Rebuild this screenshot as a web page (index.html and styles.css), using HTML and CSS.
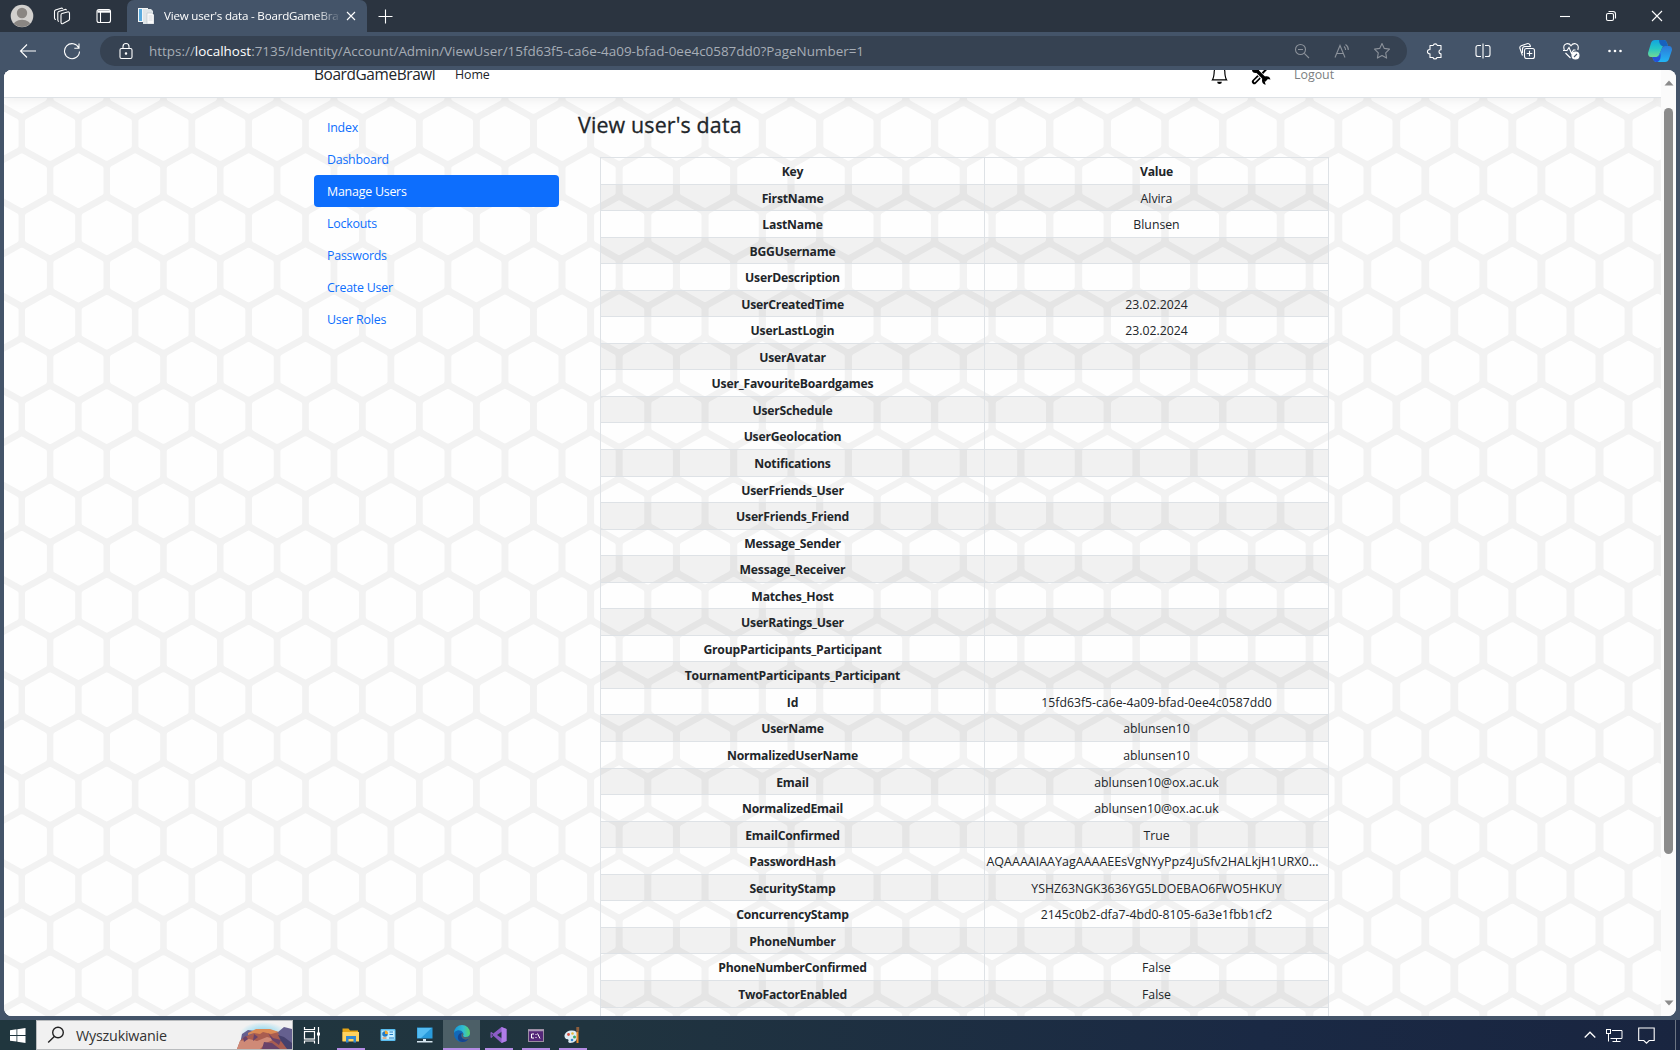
FILE: index.html
```html
<!DOCTYPE html>
<html lang="pl">
<head>
<meta charset="utf-8">
<title>View user's data - BoardGameBrawl</title>
<link rel="stylesheet" href="styles.css">
</head>
<body>
<header class="titlebar">
  <div class="slot avatar"><svg width="24" height="24" viewBox="0 0 24 24"><defs><clipPath id="av"><circle cx="12" cy="12" r="11"/></clipPath></defs><circle cx="12" cy="12" r="11.3" fill="#d2d0ce"/><g clip-path="url(#av)" fill="#8a8683"><circle cx="12" cy="9" r="5.2"/><path d="M2.500 24c0-5 4-8.300 9.500-8.300s9.500 3.300 9.500 8.300z"/></g></svg></div>
  <div class="slot spaces"><svg class="line" width="18" height="18" viewBox="0 0 18 18"><path d="M9 6.500l5.500-1.500q2-.5 2 1.500v5.500q0 1-1 1.500L10 16.500q-2 .7-2-1.300V8q0-1.200 1-1.500z"/><path d="M6 14.500q-1.200-.3-1.200-1.500V6q0-1.200 1-1.500L12 2.500q1-.3 1.500.7M3 12.500q-1.500 0-1.500-1.500V4.500q0-1 1-1.500L8 1.200q1.200-.3 1.800.6"/></svg></div>
  <div class="slot vertical"><svg class="line" width="16" height="16" viewBox="0 0 16 16"><rect x="1" y="1.500" width="13.500" height="13" rx="2"/><path d="M1.500 3.500H14" stroke-width="2.400"/><path d="M4.500 4v10"/></svg></div>
  <div class="tab">
    <svg width="16" height="16" viewBox="0 0 16 16"><rect x="0" y="0" width="10" height="14" fill="#f4f6f7"/><rect x="1" y="1" width="3" height="12" fill="#58a9dc"/><path d="M5 1h8l2 2v13H5z" fill="#dfe5e8"/><path d="M9 5h5l2 2v9H9z" fill="#fafafa" stroke="#b9c3c9" stroke-width=".6"/><path d="M10.500 8h4M10.500 10h4M10.500 12h4" stroke="#c8cfd4" stroke-width=".7"/></svg>
    <span class="tab-title">View user's data - BoardGameBrawl</span>
    <svg class="line" width="10" height="10" viewBox="0 0 10 10"><path d="M1 1l8 8M9 1L1 9"/></svg>
  </div>
  <div class="slot plus"><svg class="line" width="15" height="15" viewBox="0 0 15 15"><path d="M7.500 .5v14M.5 7.500h14"/></svg></div>
  <div class="window-controls">
    <svg class="line" width="12" height="12" viewBox="0 0 12 12"><path d="M1 6.500h10"/></svg>
    <svg class="line" width="12" height="12" viewBox="0 0 12 12"><rect x="1.500" y="3.500" width="7" height="7" rx="1.500"/><path d="M3.500 1.500H8q2.500 0 2.500 2.500v4.500"/></svg>
    <svg class="line" width="12" height="12" viewBox="0 0 12 12"><path d="M1 1l10 10M11 1L1 11"/></svg>
  </div>
</header>

<div class="toolbar">
  <div class="slot"><svg class="line" width="18" height="16" viewBox="0 0 18 16"><path d="M17 8H1.500M8 1.500L1.500 8 8 14.500"/></svg></div>
  <div class="slot reload"><svg class="line" width="18" height="18" viewBox="0 0 18 18"><path d="M15.800 6A7.500 7.500 0 1 0 16.500 9.500M16 1.500V6.200h-4.700"/></svg></div>
  <div class="address">
    <svg class="line" width="20" height="20" viewBox="0 0 20 20"><rect x="4" y="7.500" width="12" height="10" rx="1.500"/><path d="M7 7.500V5.500a3 3 0 0 1 6 0v2"/><circle cx="10" cy="12.500" r=".7" fill="#fff"/></svg>
    <span class="url">https://<b>localhost</b>:7135/Identity/Account/Admin/ViewUser/15fd63f5-ca6e-4a09-bfad-0ee4c0587dd0?PageNumber=1</span>
    <div class="slot dim"><svg class="line" width="16" height="16" viewBox="0 0 16 16"><circle cx="6.500" cy="6.500" r="5"/><path d="M10.300 10.300L15 15M4 6.500h5"/></svg></div>
    <div class="slot dim"><svg class="line" width="18" height="18" viewBox="0 0 18 18"><path d="M2 15.500L7 3.500l5 12M3.800 11.500h6.400M11 4.500q1.600 1.300 1.600 3.500M12.500 2.500q3 2 2.800 5.500"/></svg></div>
    <div class="slot dim"><svg class="line" width="18" height="18" viewBox="0 0 18 18"><path d="M9 1.500l2.300 4.900 5.200.7-3.800 3.700.9 5.300L9 13.500l-4.600 2.600.9-5.300L1.500 7.100l5.200-.7z" stroke-linejoin="round"/></svg></div>
  </div>
  <div class="slot ext"><svg class="line" width="18" height="18" viewBox="0 0 18 18"><path d="M4 3.500h3.200a2.100 2.100 0 0 1 4.100 0H15v4.200a2 2 0 0 0 0 4v3.800h-4a2.100 2.100 0 0 1-4 0H4v-3.800a2.100 2.100 0 1 1 0-4.100z" stroke-linejoin="round"/></svg></div>
  <div class="divider"></div>
  <div class="slot"><svg class="line" width="18" height="18" viewBox="0 0 18 18"><path d="M7 3.500H4q-2 0-2 2v7q0 2 2 2h3M11 3.500h3q2 0 2 2v7q0 2-2 2h-3M9 1.500v15"/></svg></div>
  <div class="slot coll"><svg class="line" width="18" height="18" viewBox="0 0 18 18"><rect x="6.500" y="6.500" width="10" height="10" rx="2"/><path d="M11.500 8.700v5.600M8.700 11.500h5.600M4.500 13.500L2 6.500q-.7-2 1.200-2.800L9 1.700q2-.6 3 1.300l.5 1.500M4.500 11V7q0-2.500 2.500-2.500h6"/></svg></div>
  <div class="slot"><svg class="line" width="18" height="18" viewBox="0 0 18 18"><path d="M2.300 8Q.5 3 4.500 1.700 7.500 1.200 9 3.700q1.700-2.500 4.500-2Q17.500 3 15.800 8M3.500 11l5 5M1 8.500h4l2-3 2.500 6 2-3.500h2"/><circle cx="13.500" cy="13.500" r="3.500" fill="#fff"/><path d="M12 15l3-3" stroke="#45556a"/></svg></div>
  <div class="slot dots"><svg width="16" height="4" viewBox="0 0 16 4"><g fill="#fff"><circle cx="2.500" cy="2" r="1.300"/><circle cx="8" cy="2" r="1.300"/><circle cx="13.500" cy="2" r="1.300"/></g></svg></div>
  <div class="slot copilot"><svg width="26" height="24" viewBox="0 0 26 24"><defs><linearGradient id="c1" x1="0" y1="0" x2="0" y2="1"><stop offset="0" stop-color="#12a5df"/><stop offset=".5" stop-color="#25c6c5"/><stop offset="1" stop-color="#72d994"/></linearGradient><linearGradient id="c2" x1="0" y1="0" x2="0" y2="1"><stop offset="0" stop-color="#2d78d8"/><stop offset="1" stop-color="#22b6f4"/></linearGradient></defs><path d="M8 1h9q2 0 3 3l1 3h-5L12 16q-1 2.500-3 2H4q-3 0-3-4L4 4q1-3 4-3z" fill="url(#c1)"/><path d="M12 1h5q2 0 3 3l1 3h-6q-3-2-3-6z" fill="#1762be"/><path d="M18 7h4q3 0 3 4l-3 9q-1 3-4 3H9q-2 0-3-3l-.5-2H9q2 0 3-2l3-7q.8-2 3-2z" fill="url(#c2)"/><path d="M5.500 18H10q2-.3 2.500-2l1-2q1 7-3 9H9q-2 0-3-3z" fill="#2450d9"/></svg></div>
</div>

<div class="frame">
  <div class="page">
    <svg class="honeycomb" id="honeycomb" width="1657" height="946"></svg>
    <nav class="site-nav">
      <span class="brand">BoardGameBrawl</span>
      <span class="home">Home</span>
      <svg class="bell" width="19" height="19" viewBox="0 0 16 16"><path d="M8 16a2 2 0 0 0 2-2H6a2 2 0 0 0 2 2M8 1.918l-.797.161A4 4 0 0 0 4 6c0 .628-.134 2.197-.459 3.742-.16.767-.376 1.566-.663 2.258h10.244c-.287-.692-.502-1.490-.663-2.258C12.134 8.197 12 6.628 12 6a4 4 0 0 0-3.203-3.920zM14.220 12c.223.447.481.801.78 1H1c.299-.199.557-.553.780-1C2.680 10.200 3 6.880 3 6c0-2.420 1.720-4.440 4.005-4.901a1 1 0 1 1 1.990 0A5 5 0 0 1 13 6c0 .880.320 4.200 1.220 6"/></svg>
      <svg class="tools" width="20" height="20" viewBox="0 0 20 20"><path d="M15.500 4L4 16" stroke="#000" stroke-width="2"/><path d="M8.200 11.800L3.300 16.700" stroke="#000" stroke-width="4.800" stroke-linecap="round"/><path d="M7.800 12.200L3.600 16.400" stroke="#fff" stroke-width="1.500" stroke-linecap="round"/><path d="M3 3l11 11.500" stroke="#fff" stroke-width="5"/><path d="M3 3l12.500 12.500" stroke="#000" stroke-width="3.400"/><path d="M19.500 14.500a4.300 4.300 0 1 0-4.800 5.200l-1-3.200 2.600-2.500z"/><circle cx="4.500" cy="4.500" r="3.500"/></svg>
      <span class="logout">Logout</span>
    </nav>
    <main class="content">
      <ul class="menu">
        <li>Index</li><li>Dashboard</li><li class="active">Manage Users</li><li>Lockouts</li><li>Passwords</li><li>Create User</li><li>User Roles</li>
      </ul>
      <section class="details">
        <h3>View user's data</h3>
        <table>
          <tbody>
          <tr class="head"><th>Key</th><th>Value</th></tr>
          <tr><th>FirstName</th><td>Alvira</td></tr>
          <tr><th>LastName</th><td>Blunsen</td></tr>
          <tr><th>BGGUsername</th><td></td></tr>
          <tr><th>UserDescription</th><td></td></tr>
          <tr><th>UserCreatedTime</th><td>23.02.2024</td></tr>
          <tr><th>UserLastLogin</th><td>23.02.2024</td></tr>
          <tr><th>UserAvatar</th><td></td></tr>
          <tr><th>User_FavouriteBoardgames</th><td></td></tr>
          <tr><th>UserSchedule</th><td></td></tr>
          <tr><th>UserGeolocation</th><td></td></tr>
          <tr><th>Notifications</th><td></td></tr>
          <tr><th>UserFriends_User</th><td></td></tr>
          <tr><th>UserFriends_Friend</th><td></td></tr>
          <tr><th>Message_Sender</th><td></td></tr>
          <tr><th>Message_Receiver</th><td></td></tr>
          <tr><th>Matches_Host</th><td></td></tr>
          <tr><th>UserRatings_User</th><td></td></tr>
          <tr><th>GroupParticipants_Participant</th><td></td></tr>
          <tr><th>TournamentParticipants_Participant</th><td></td></tr>
          <tr><th>Id</th><td>15fd63f5-ca6e-4a09-bfad-0ee4c0587dd0</td></tr>
          <tr><th>UserName</th><td>ablunsen10</td></tr>
          <tr><th>NormalizedUserName</th><td>ablunsen10</td></tr>
          <tr><th>Email</th><td>ablunsen10@ox.ac.uk</td></tr>
          <tr><th>NormalizedEmail</th><td>ablunsen10@ox.ac.uk</td></tr>
          <tr><th>EmailConfirmed</th><td>True</td></tr>
          <tr><th>PasswordHash</th><td class="hash">AQAAAAIAAYagAAAAEEsVgNYyPpz4JuSfv2HALkjH1URX0...</td></tr>
          <tr><th>SecurityStamp</th><td>YSHZ63NGK3636YG5LDOEBAO6FWO5HKUY</td></tr>
          <tr><th>ConcurrencyStamp</th><td>2145c0b2-dfa7-4bd0-8105-6a3e1fbb1cf2</td></tr>
          <tr><th>PhoneNumber</th><td></td></tr>
          <tr><th>PhoneNumberConfirmed</th><td>False</td></tr>
          <tr><th>TwoFactorEnabled</th><td>False</td></tr>
          <tr><th></th><td></td></tr>
          </tbody>
        </table>
      </section>
    </main>
  </div>
  <div class="scrollbar">
    <svg width="10" height="6" viewBox="0 0 10 6"><path d="M5 .5L9.500 5.500H.5z" fill="#8b8b8b"/></svg>
    <div class="thumb"></div>
    <svg width="10" height="6" viewBox="0 0 10 6"><path d="M5 5.500L9.500 .5H.5z" fill="#8b8b8b"/></svg>
  </div>
</div>

<footer class="taskbar">
  <div class="start"><svg width="17" height="17" viewBox="0 0 17 17"><path d="M1 3.200l6.500-.9V8H1zM8.300 2.200L16.500 1v7H8.300zM1 8.900h6.500v5.700L1 13.700zM8.300 8.900h8.200V16l-8.200-1.200z" fill="#fff"/></svg></div>
  <div class="search">
    <svg width="18" height="18" viewBox="0 0 18 18" fill="none" stroke="#222" stroke-width="1.400"><circle cx="11" cy="6.500" r="5.300"/><path d="M7.300 10.500L1.200 16.500"/></svg>
    <span>Wyszukiwanie</span>
    <svg class="canyon" width="58" height="28" viewBox="0 0 58 28"><defs><radialGradient id="sky"><stop offset="0" stop-color="#73d3f3"/><stop offset="1" stop-color="#f1f1f1"/></radialGradient></defs><ellipse cx="29" cy="12" rx="23" ry="11" fill="url(#sky)"/><path d="M8 13l6-4 7 1 9-2 14 3 6-5 8 2v20H5z" fill="#65608f"/><path d="M3 28l3-8 4-4 8-3 6-5h10l10 4 4 6 6 4 4 6z" fill="#a95d50"/><path d="M14 12l8-4h14l9 3-8 2-8-2-3 2-6-1-6 2z" fill="#dc8a55"/><path d="M6 20l9-2 8 2 10-4 8 2-9 4-6 6H3z" fill="#cf8a77"/><path d="M20 13l4 3-5 4zM34 12l5 5 8 2-2 5-7-5zM30 21l8 1 8 6H28zM9 17l3-2 2 3-4 3z" fill="#69436a"/><path d="M44 14l6 2 8 6v6h-5l-6-8z" fill="#45416d"/></svg>
  </div>
  <div class="app view"><svg width="18" height="17" viewBox="0 0 18 17" fill="none" stroke="#fff" stroke-width="1.200"><path d="M1.500 0v2.500h10V0M1.500 16.500V14h10v2.500"/><rect x="1.500" y="4.500" width="10" height="7.500"/><path d="M15.500 0v17"/><path d="M14 5.500h3v3h-3z" fill="#fff" stroke="none"/></svg></div>
  <div class="app running"><svg width="17" height="16" viewBox="0 0 17 16"><path d="M.5 1.500h6l1.500 2H16V14H.5z" fill="#e6a515"/><path d="M.5 5H17v9.500H.5z" fill="#ffd35f"/><path d="M4 9h10v6.500h-2.500V12h-5v3.500H4z" fill="#3489d0"/></svg></div>
  <div class="app"><svg width="16" height="14" viewBox="0 0 16 14"><rect x=".5" y="1" width="15" height="12" rx="1" fill="#59bdf0"/><rect x="1.500" y="2.500" width="13" height="9" fill="#c8efff"/><circle cx="5" cy="6" r="2.800" fill="#237cc4"/><path d="M5 6V2.500A3 3 0 0 1 8 6z" fill="#f3a72c"/><path d="M9.500 4H13M9.500 6.500H13M9 10h5" stroke="#237cc4"/><path d="M2.500 10h4" stroke="#e47528"/></svg></div>
  <div class="app"><svg width="17" height="16" viewBox="0 0 17 16"><path d="M1 .5h15.500v11H1z" fill="#299bdc"/><path d="M1.500 1h14L5 11H1.500z" fill="#54bcf2"/><path d="M7 12h3v2H7zM1 14h15.500v1.500H1z" fill="#d5e5ef"/></svg></div>
  <div class="app current"><svg width="18" height="18" viewBox="0 0 18 18"><defs><linearGradient id="e1"><stop offset="0" stop-color="#1595d8"/><stop offset=".6" stop-color="#32bed0"/><stop offset="1" stop-color="#59d764"/></linearGradient></defs><circle cx="9" cy="9" r="8" fill="#1269b9"/><path d="M1 8A8 8 0 0 1 17 8q0 4-4.500 4-3 0-2.500-1.500 1-1 0-3Q8.500 5 5 5.300 2 6 1 8z" fill="url(#e1)"/><path d="M9 8q-2 2 0 5 2.500 2.500 6.500.8-2.500 3.500-6.500 3.200-5-1-4-6 1-3 4-3z" fill="#17458e"/><path d="M9.300 8q1.700.5.900 2-.7 1.800 2.300 2.200 2.400.2 4-1.200l-.8 2.500Q12 15.500 9.500 13 7.500 10.500 9.300 8z" fill="#52636b"/></svg></div>
  <div class="app running vs"><svg width="17" height="16" viewBox="0 0 17 16"><path d="M11.500 0L16.500 2v12l-5 2-8.200-7.200L1.500 11 .5 10.500v-5l1-.5 1.800 1.500zM12 4.500L7 8l5 3.500zM1.800 6.500v3L3 8z" fill="#8c5cc8" fill-rule="evenodd"/><path d="M11.500 0L16.500 2v12l-5 2z" fill="#b07ce8"/></svg></div>
  <div class="app running"><svg width="16" height="13" viewBox="0 0 16 13"><rect x=".5" y=".5" width="15" height="12" fill="#542779" stroke="#9a8da1"/><path d="M0 1.500h16" stroke="#aa98b7" stroke-width="1.500"/><path d="M6 5H3.500v4H6M8 5v1M8 8v1M9.500 4.500L12 9.500" stroke="#fff" fill="none"/></svg></div>
  <div class="app running"><svg width="17" height="17" viewBox="0 0 17 17"><path d="M7 3.500q7-.5 6.500 5.500-.5 7-7.500 7-2.500-.3-1.500-2.500Q5 12 2 12-.5 10 1 7q2-3.300 6-3.500z" fill="#ddecf4"/><circle cx="4.500" cy="7.500" r="1.400" fill="#d84f40"/><circle cx="8.500" cy="6.500" r="1.300" fill="#e9b83e"/><circle cx="10.500" cy="10" r="1.500" fill="#39a56b"/><circle cx="8" cy="13" r="1.300" fill="#3485ce"/><path d="M13.500 4.500V16" stroke="#e78a2c" stroke-width="2"/><path d="M12.300 0h2.900v4l-1.400 1-1.500-1z" fill="#8e5e3c"/></svg></div>
  <div class="tray">
    <svg width="12" height="8" viewBox="0 0 12 8" fill="none" stroke="#fff" stroke-width="1.300"><path d="M.7 6.500L6 1.200l5.300 5.300"/></svg>
    <svg width="17" height="15" viewBox="0 0 17 15" fill="none" stroke="#fff"><path d="M6 2.500h10v8H4.500M10.500 10.500v3M6.500 13.500h8M2.500 6v7.500"/><rect x=".5" y="1.500" width="4" height="4"/></svg>
    <svg width="17" height="17" viewBox="0 0 17 17" fill="none" stroke="#fff" stroke-width="1.100"><path d="M.7 1h15.500v12.500h-5l-2.700 2.700-2.700-2.700H.7z"/></svg>
    <div class="desktop-peek"></div>
  </div>
</footer>
<script src="honeycomb.js"></script>
</body>
</html>
```

FILE: styles.css
```css
* { box-sizing: border-box; }
body {
  margin: 0;
  width: 1680px;
  height: 1050px;
  overflow: hidden;
  display: flex;
  flex-direction: column;
  background: #445469;
  font-family: "Open Sans", "Noto Sans", sans-serif;
  color: #212529;
}
svg { display: block; flex: none; }
.line { fill: none; stroke: #fff; stroke-width: 1.1; }
.slot { width: 40px; display: flex; align-items: center; justify-content: center; flex: none; }

/* Window title bar */
.titlebar { height: 32px; flex: none; display: flex; background: #2b3440; }
.avatar { margin-left: 2px; }
.vertical { margin-left: 2px; }
.tab {
  width: 240px;
  margin-left: 3px;
  padding: 0 11px;
  display: flex;
  align-items: center;
  background: #445469;
  border-radius: 7px 7px 0 0;
}
.tab-title {
  width: 176px;
  margin: 0 7px 0 10px;
  padding-bottom: 1px;
  overflow: hidden;
  white-space: nowrap;
  color: #fff;
  font-size: 11.6px;
  letter-spacing: -0.2px;
  -webkit-mask-image: linear-gradient(90deg, #000 152px, transparent 178px);
  mask-image: linear-gradient(90deg, #000 152px, transparent 178px);
}
.plus { width: 36px; }
.window-controls { margin-left: auto; width: 138px; display: flex; align-items: center; justify-content: space-around; }

/* Address bar */
.toolbar { height: 38px; flex: none; display: flex; align-items: center; padding-left: 8px; }
.reload { margin: 0 8px 0 4px; }
.address {
  width: 1307px;
  flex: none;
  height: 30px;
  padding: 0 5px 0 16px;
  display: flex;
  align-items: center;
  background: #364252;
  border-radius: 15px;
}
.url { flex: 1; margin-left: 13px; color: #a6adb6; font-size: 13.45px; white-space: nowrap; }
.url b { font-weight: 400; color: #fff; }
.dim .line { stroke: #8b919a; }
.ext { margin-left: 8px; }
.divider { width: 1px; height: 16px; margin: 0 4px; background: #6c7a8a; }
.coll, .dots { margin: 0 4px; }
.copilot { width: 42px; }

/* Browser viewport */
.frame {
  height: 946px;
  flex: none;
  margin: 0 4px 4px;
  display: flex;
  overflow: hidden;
  background: #fff;
  border-radius: 8px;
}
.page { position: relative; width: 1657px; overflow: hidden; }
.honeycomb { position: absolute; left: 0; top: 0; }
.scrollbar { width: 15px; padding: 10px 0; display: flex; flex-direction: column; align-items: center; background: #fbfbfb; }
.thumb { width: 9px; height: 746px; margin: 22px 0 auto; background: #8b8b8b; border-radius: 5px; }

.site-nav {
  position: relative;
  height: 49px;
  margin-top: -21px;
  padding-left: 310px;
  display: flex;
  align-items: center;
  background: #fff;
  border-bottom: 1px solid #dee2e6;
  box-shadow: 0 3px 10px rgba(0, 0, 0, .06);
}
.brand { width: 141px; font-size: 15.4px; letter-spacing: -0.38px; padding-top: 2px; }
.home { width: 755px; font-size: 12.4px; padding-top: 2px; letter-spacing: -.1px; }
.tools { margin: 0 23px 0 22px; }
.bell, .tools { margin-top: 3px; }
.logout { font-size: 12.4px; color: #7c7f82; padding-top: 2px; }

.content { position: relative; display: flex; padding: 13px 0 0 310px; }
.menu { width: 245px; margin: 0; padding: 0; list-style: none; font-size: 12.4px; letter-spacing: -0.22px; color: #0d6efd; }
.menu li { height: 32px; padding: 1px 13px 0; line-height: 32px; }
.menu .active { background: #0d6efd; color: #fff; border-radius: 4px; }
.details { margin-left: 19px; }
h3 { margin: 0 0 19px; height: 27px; line-height: 27px; font-size: 21.4px; font-weight: 500; letter-spacing: .15px; -webkit-text-stroke: .3px #212529; }

table { display: block; width: 729px; margin-left: 22px; border-top: 1px solid #dee2e6; font-size: 12.25px; }
tbody { display: block; }
tr { display: flex; height: 26.56px; }
tr:nth-child(even) { background: rgba(0, 0, 0, .05); }
th, td {
  width: 344px;
  padding: 1px 0 0;
  line-height: 26px;
  text-align: center;
  white-space: nowrap;
  border: solid #dee2e6;
  border-width: 0 1px 1px 0;
}
th:first-child { width: 385px; border-left-width: 1px; }
th { font-size: 12.2px; font-weight: 700; letter-spacing: -0.22px; }
.hash { font-size: 12.5px; padding-right: 8px; }

/* Desktop taskbar */
.taskbar { height: 30px; flex: none; display: flex; background: linear-gradient(90deg, #20363e 0, #20343f 35%, #1a2944 75%, #192540 100%); }
.start { width: 36px; padding: 0 4px 0 3px; display: flex; align-items: center; justify-content: center; }
.search { width: 257px; padding-left: 10px; display: flex; align-items: center; background: #f1f1f1; border: 1px solid #b9bcbe; color: #333; font-size: 14.3px; letter-spacing: -0.2px; }
.search span { margin-left: 11px; }
.canyon { margin-left: auto; }
.app { width: 37px; display: flex; align-items: center; justify-content: center; }
.view { margin-right: 2px; }
.running { background: linear-gradient(#b48be4, #b48be4) 50% 100% / 28px 2px no-repeat; }
.current { background: #4c5f67; border-bottom: 2px solid #b48be4; }
.tray { margin-left: auto; display: flex; align-items: center; }
.tray svg:nth-child(2) { margin: 0 15px 0 10px; }
.desktop-peek { width: 1px; height: 30px; margin: 0 4px 0 20px; background: #6c7482; }
```

FILE: honeycomb.js
```js
// Fills the page background with pale rounded hexagons.
(function () {
  var svg = document.getElementById("honeycomb");
  var ns = "http://www.w3.org/2000/svg";
  function add(name, attrs) {
    var el = document.createElementNS(ns, name);
    for (var key in attrs) el.setAttribute(key, attrs[key]);
    svg.appendChild(el);
  }
  add("rect", { width: 1657, height: 946, fill: "#f2f2f2" });
  var d = "";
  for (var row = -1; row < 20; row++) {
    for (var col = -1; col < 30; col++) {
      var n = col + 0.5 + (row % 2 !== 0 ? 0.5 : 0);
      var x = 17.8 + n * (56.6 + n * 0.028);
      var y = 63.5 + row * (47.2 - n * 0.011);
      d += "M" + x + " " + (y - 24.8) + "l22.600 12.600v24.400l-22.600 12.600l-22.600-12.600v-24.400z";
    }
  }
  add("path", { d: d, fill: "#fefefe", stroke: "#fefefe", "stroke-width": 5, "stroke-linejoin": "round" });
})();
```
